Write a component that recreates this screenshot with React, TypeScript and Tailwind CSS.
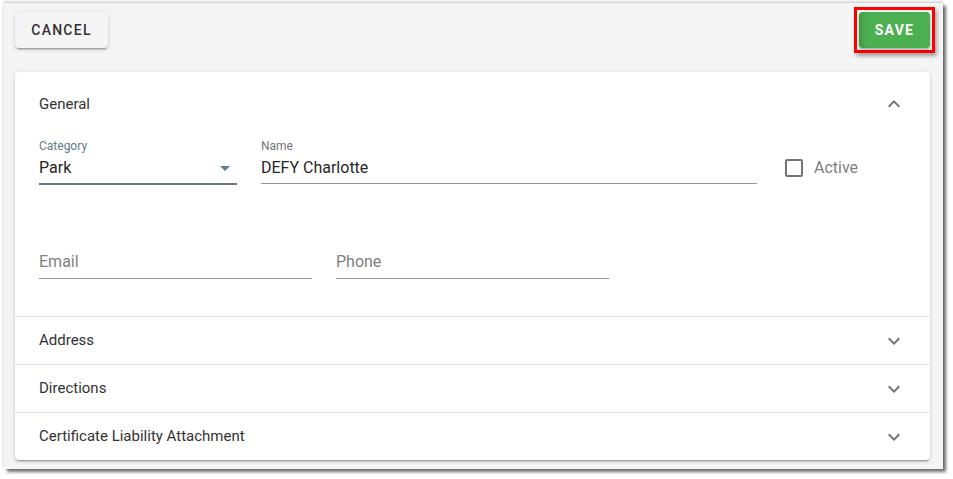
import React from "react";

const ChevronUp = () => (
  <svg width="24" height="24" viewBox="0 0 24 24" className="fill-[#757575]">
    <path d="M7.41,15.41L12,10.83L16.59,15.41L18,14L12,8L6,14L7.41,15.41Z" />
  </svg>
);
const ChevronDown = () => (
  <svg width="24" height="24" viewBox="0 0 24 24" className="fill-[#757575]">
    <path d="M7.41,8.58L12,13.17L16.59,8.58L18,10L12,16L6,10L7.41,8.58Z" />
  </svg>
);

const Row = ({ title }: { title: string }) => (
  <div className="flex h-[48px] items-center justify-between border-t border-[#e0e0e0] px-[24px]">
    <span className="text-[15px] text-[#333333]">{title}</span>
    <ChevronDown />
  </div>
);

export default function App() {
  return (
    <div className="h-[479px] w-[953px] bg-white pl-[4px] pt-[3px] font-['Roboto',sans-serif]">
      <div className="flex h-[466px] w-[939px] flex-col bg-[#f5f5f5] pl-[11px] pr-[13px] pt-[9px] shadow-[0_-1px_3px_rgba(0,0,0,0.25),3px_3px_3px_rgba(0,0,0,0.55)]">
        <div className="flex items-start justify-between">
          <button className="h-[36px] w-[93px] rounded-[4px] bg-[#f5f5f5] text-[14px] font-medium uppercase tracking-[1.25px] text-[#333333] shadow-[0_3px_1px_-2px_rgba(0,0,0,0.2),0_2px_2px_0_rgba(0,0,0,0.14),0_1px_5px_0_rgba(0,0,0,0.12)]">
            Cancel
          </button>
          <div className="-mr-[5px] -mt-[5px] border-[3px] border-[#ff0000] p-[2px] shadow-[2px_3px_4px_rgba(0,0,0,0.35)]">
            <button className="h-[36px] w-[71px] rounded-[4px] bg-[#4caf50] text-[14px] font-bold uppercase tracking-[1.25px] text-white shadow-[inset_5px_0_4px_-2px_rgba(0,0,0,0.15),0_2px_3px_rgba(0,0,0,0.3)]">
              Save
            </button>
          </div>
        </div>

        <div className="mt-[19px] overflow-hidden rounded-[4px] bg-white shadow-[0_3px_1px_-2px_rgba(0,0,0,0.2),0_2px_2px_0_rgba(0,0,0,0.14),0_1px_5px_0_rgba(0,0,0,0.12)]">
          <div className="flex h-[64px] items-center justify-between px-[24px]">
            <span className="text-[15px] text-[#333333]">General</span>
            <ChevronUp />
          </div>
          <div className="px-[24px] pb-[37px] pt-[2px]">
            <div className="flex items-start">
              <div className="w-[198px]">
                <div className="text-[12px] leading-[16px] text-[#607d8b]">Category</div>
                <div className="flex h-[31px] items-start justify-between border-b-2 border-[#607d8b] pt-[2px]">
                  <span className="text-[16px] leading-[24px] text-[#262626]">Park</span>
                  <svg width="24" height="24" viewBox="0 0 24 24" className="fill-[#607d8b]">
                    <path d="M7,10L12,15L17,10H7Z" />
                  </svg>
                </div>
              </div>
              <div className="ml-[24px] w-[496px]">
                <div className="text-[12px] leading-[16px] text-[#757575]">Name</div>
                <div className="h-[30px] border-b border-[#949494] pt-[2px]">
                  <span className="text-[16px] leading-[24px] text-[#262626]">DEFY Charlotte</span>
                </div>
              </div>
              <div className="ml-[28px] mt-[18px] flex items-center">
                <div className="h-[18px] w-[18px] rounded-[2px] border-2 border-[#757575]" />
                <span className="ml-[11px] text-[16px] leading-[24px] text-[#808080]">Active</span>
              </div>
            </div>
            <div className="mt-[49px] flex">
              <div className="w-[273px]">
                <div className="h-[16px]" />
                <div className="h-[29px] border-b border-[#949494]">
                  <span className="text-[16px] leading-[24px] text-[#808080]">Email</span>
                </div>
              </div>
              <div className="ml-[24px] w-[273px]">
                <div className="h-[16px]" />
                <div className="h-[29px] border-b border-[#949494]">
                  <span className="text-[16px] leading-[24px] text-[#808080]">Phone</span>
                </div>
              </div>
            </div>
          </div>
          <Row title="Address" />
          <Row title="Directions" />
          <Row title="Certificate Liability Attachment" />
        </div>
      </div>
    </div>
  );
}
